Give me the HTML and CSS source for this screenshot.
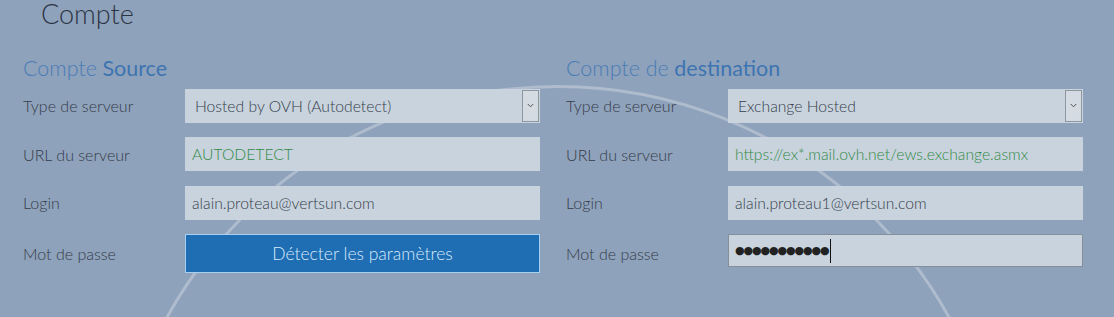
FILE: index.html
```html
<!DOCTYPE html>
<html lang="fr">
<head>
    <meta charset="UTF-8">
    <meta name="viewport" content="width=device-width, initial-scale=1.0">
    <title>Compte</title>
    <link rel="stylesheet" href="styles.css">
</head>
<body>
    <main class="page">
        <h1 class="page-title">Compte</h1>

        <div class="accounts">
            <!-- Source account -->
            <section class="account">
                <h2 class="account-title"><span class="light">Compte</span> Source</h2>
                <div class="fields">
                    <label class="field-label">Type de serveur</label>
                    <div class="select-wrap">
                        <select class="field-select">
                            <option>Hosted by OVH (Autodetect)</option>
                        </select>
                        <span class="select-arrow">
                            <svg width="7" height="5" viewBox="0 0 7 5"><path d="M0.8 1 L3.5 3.8 L6.2 1" fill="none" stroke="#555" stroke-width="1"/></svg>
                        </span>
                    </div>

                    <label class="field-label">URL du serveur</label>
                    <input class="field-input green" type="text" value="AUTODETECT">

                    <label class="field-label">Login</label>
                    <input class="field-input" type="text" value="alain.proteau@vertsun.com">

                    <label class="field-label">Mot de passe</label>
                    <button class="detect-btn">Détecter les paramètres</button>
                </div>
            </section>

            <!-- Destination account -->
            <section class="account">
                <h2 class="account-title"><span class="light">Compte de</span> destination</h2>
                <div class="fields">
                    <label class="field-label">Type de serveur</label>
                    <div class="select-wrap">
                        <select class="field-select">
                            <option>Exchange Hosted</option>
                        </select>
                        <span class="select-arrow">
                            <svg width="7" height="5" viewBox="0 0 7 5"><path d="M0.8 1 L3.5 3.8 L6.2 1" fill="none" stroke="#555" stroke-width="1"/></svg>
                        </span>
                    </div>

                    <label class="field-label">URL du serveur</label>
                    <input class="field-input green" type="text" value="https://ex*.mail.ovh.net/ews.exchange.asmx">

                    <label class="field-label">Login</label>
                    <input class="field-input" type="text" value="alain.proteau1@vertsun.com">

                    <label class="field-label">Mot de passe</label>
                    <div class="password-field"><span class="dots">●●●●●●●●●●●</span><span class="caret"></span></div>
                </div>
            </section>
        </div>
    </main>
</body>
</html>
```

FILE: styles.css
```css
/* General Reset */
* {
    margin: 0;
    padding: 0;
    box-sizing: border-box;
}

body {
    font-family: Lato, "Open Sans", sans-serif;
    background-color: #8fa2bb;
    color: #3a4250;
    overflow: hidden;
    height: 317px;
}

.page {
    position: relative;
    padding: 0 0 0 23px;
    height: 317px;
    overflow: hidden;
}

/* Big faint arc in the background */
.page::before {
    content: "";
    position: absolute;
    left: 110px;
    top: 85px;
    width: 890px;
    height: 890px;
    border: 3px solid rgba(255, 255, 255, 0.28);
    border-radius: 50%;
    z-index: 0;
}

.page-title {
    position: relative;
    font-size: 27px;
    font-weight: 300;
    line-height: 28px;
    color: #2b3444;
    margin-left: 18px;
}

/* Two columns */
.accounts {
    position: relative;
    z-index: 1;
    display: grid;
    grid-template-columns: 517px 517px;
    column-gap: 26px;
    margin-top: 28px;
}

.account-title {
    font-size: 21.5px;
    font-weight: 400;
    line-height: 24px;
    color: #3d74b1;
    margin-bottom: 8.6px;
}

.account-title .light {
    font-weight: 300;
    color: #4a7cb6;
}

.fields {
    display: grid;
    grid-template-columns: 162px 355px;
    grid-template-rows: 34px 34px 34px 39px;
    row-gap: 14.5px;
    align-items: center;
}

.field-label {
    font-size: 16px;
    font-weight: 300;
    color: #343c49;
}

.field-input,
.field-select {
    width: 100%;
    height: 34px;
    border: none;
    outline: none;
    background-color: #c8d3de;
    font-family: Lato, "Open Sans", sans-serif;
    font-size: 15.7px;
    font-weight: 300;
    color: #363e4a;
    padding: 0 7px;
}

.field-input.green {
    color: #338a45;
}

/* Select with its little arrow box */
.select-wrap {
    position: relative;
    height: 34px;
}

.field-select {
    appearance: none;
    -webkit-appearance: none;
    padding-left: 10px;
}

.select-arrow {
    position: absolute;
    right: 1px;
    top: 1px;
    bottom: 1px;
    width: 17px;
    border: 1px solid #8e969f;
    background-color: #d4dbe2;
    display: flex;
    align-items: center;
    justify-content: center;
    pointer-events: none;
}

/* Detect button */
.detect-btn {
    width: 100%;
    height: 39px;
    background-color: #1f6db3;
    border: 1px solid #a6d0f0;
    color: #d6ebfd;
    font-family: Lato, "Open Sans", sans-serif;
    font-size: 17.5px;
    font-weight: 300;
    cursor: pointer;
}

/* Password */
.password-field {
    align-self: start;
    height: 33px;
    background-color: #c8d3de;
    border: 1px solid #858f9a;
    display: flex;
    align-items: center;
    padding-left: 6px;
}

.password-field .dots {
    font-family: "DejaVu Sans", sans-serif;
    font-size: 11px;
    letter-spacing: -1.1px;
    color: #222;
}

.password-field .caret {
    width: 1px;
    height: 24px;
    background-color: #111;
    margin-left: 2px;
}
```
